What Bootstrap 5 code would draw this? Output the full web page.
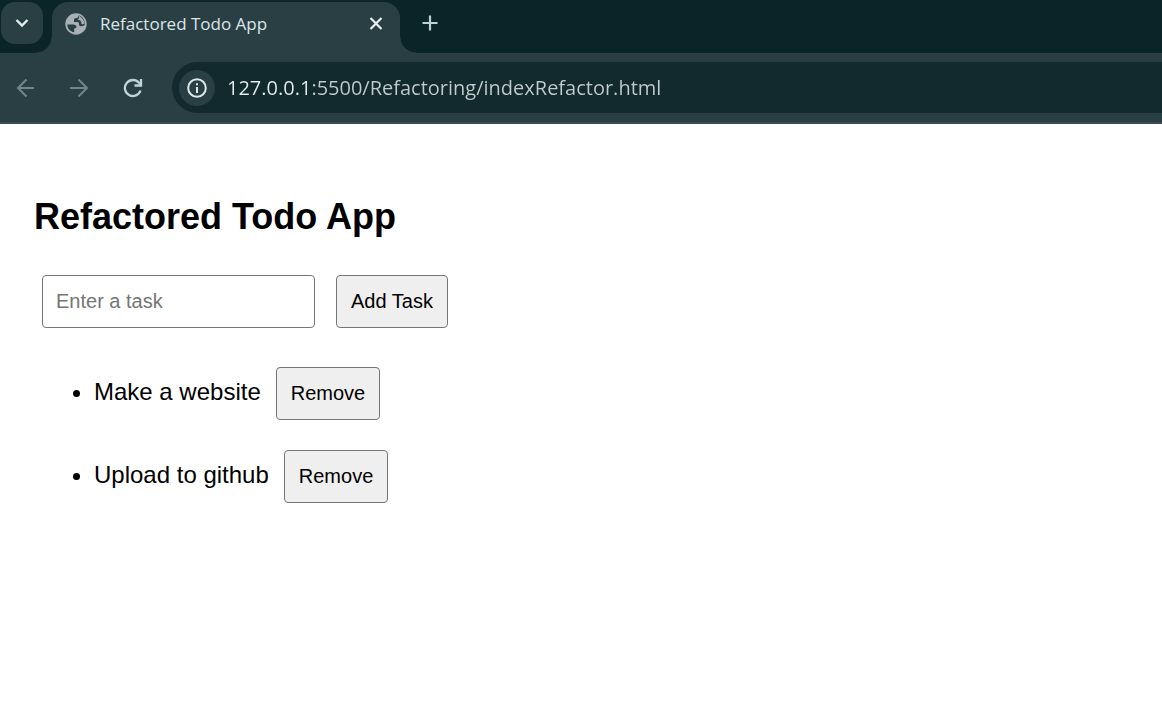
<!DOCTYPE html>
<html lang="en">
<head>
<meta charset="utf-8">
<meta name="viewport" content="width=device-width, initial-scale=1">
<title>Refactored Todo App</title>
<link href="https://cdn.jsdelivr.net/npm/bootstrap@5.3.0/dist/css/bootstrap.min.css" rel="stylesheet">
<style>
  :root { --strip: #0b2428; --bar: #293f44; --field: #12292d; }
  body { font-family: "Liberation Sans", Arial, sans-serif; color: #000; background: #fff; }
  svg { display: block; }

  /* Browser chrome */
  .browser { font-family: "Open Sans", "Noto Sans", sans-serif; }
  .browser button { background: none; border: 0; padding: 0; }
  .tab-strip { background: var(--strip); height: 53px; padding: 2px 0 0 1px; }
  .browser .tab-search { width: 42px; height: 42px; border-radius: 14px; background: var(--bar); }
  .page-tab { position: relative; width: 348px; max-width: 60%; height: 51px; margin-left: 9px; padding: 0 16px 8px 13px;
    background: var(--bar); border-radius: 16px 16px 0 0; }
  .page-tab::before, .page-tab::after { content: ""; position: absolute; bottom: 0; width: 16px; height: 16px; }
  .page-tab::before { right: 100%; background: radial-gradient(circle at 0 0, transparent 15px, var(--bar) 16px); }
  .page-tab::after { left: 100%; background: radial-gradient(circle at 100% 0, transparent 15px, var(--bar) 16px); }
  .tab-title { font-size: 17px; line-height: 24px; color: #dce5e7; margin-left: 13px; }
  .browser .new-tab { margin-left: 21px; height: 42px; }
  .tool-bar { background: var(--bar); padding: 9px 0 9px 15px; border-bottom: 2px solid #3a4a4e; }
  .nav-tools { gap: 33px; }
  .address { background: var(--field); height: 51px; margin-left: 28px; padding-left: 7px; border-radius: 26px 0 0 26px; }
  .browser .site-info { width: 36px; height: 36px; border-radius: 50%; background: var(--bar); }
  .url-box { border: 0; outline: 0; padding: 0; margin-left: 12px; font-size: 20px; line-height: 28px;
    background: linear-gradient(90deg, #e6eeef 84px, #c2cccd 84px); -webkit-background-clip: text; background-clip: text;
    -webkit-text-fill-color: transparent; }

  /* Todo page */
  .todo { padding: 69px 34px 30px; }
  .todo h1 { font-size: 36px; line-height: 48px; font-weight: 700; margin: 0 0 34px; }
  .todo form { gap: 21px; padding-left: 8px; }
  .todo .form-control, .todo .btn { height: 53px; font-size: 20px; line-height: 24px; border: 1px solid #767676; border-radius: 4px; color: #000; }
  .todo .form-control { width: 273px; padding: 0 13px; }
  .todo .form-control::placeholder { color: #757575; }
  .todo .btn { padding: 0 14px 2px; background: #efefef; }
  .task-list { margin: 39px 0 0; padding-left: 60px; font-size: 24px; line-height: 28px; }
  .task-list li + li { margin-top: 30px; }
  .task-list .btn { margin-left: 15px; vertical-align: baseline; }
</style>
</head>
<body>
<header class="browser">
  <div class="tab-strip d-flex align-items-start">
    <button type="button" class="tab-search d-flex align-items-center justify-content-center flex-shrink-0" aria-label="Search tabs">
      <svg width="14" height="10" viewBox="0 0 14 10" fill="none" stroke="#e3edee" stroke-width="2.4"><path d="M1.500 2 7 7.500 12.500 2"/></svg>
    </button>
    <div class="page-tab d-flex align-items-center">
      <svg class="flex-shrink-0" width="22" height="22" viewBox="0 0 22 22"><circle cx="11" cy="11" r="10.700" fill="#a7b0b5"/><path fill="#293f44" d="M13.500 2.500c0 1.600-.8 2.600-2.300 2.600-1.700 0-2.200.7-2.200 2v2h3.500c1.300 0 1.500 1 1.500 2.200 0 1.200.7 1.900 2 1.900 1.500 0 2.700-.4 3.700-1.200.3-4.500-1.700-8-5.200-9.500h-1ZM2.300 11.500h5.900c2 0 3.300 1 3.300 2.600 0 1-.8 1.400-2.300 1.400v3.800C5 18.600 2.300 15.500 2.300 11.500Z"/><path fill="#a7b0b5" d="M14 2.500c3 2 5.300 5 5.500 8-1 1-2.300.9-2.800.5-.6-.5-.2-2.200-1.200-3.200-1-.9-2.500-.8-3.500-1 2-.5 2.500-2 2-4.300Z"/></svg>
      <span class="tab-title text-nowrap overflow-hidden">Refactored Todo App</span>
      <button type="button" class="ms-auto" aria-label="Close tab">
        <svg width="16" height="16" viewBox="0 0 16 16" stroke="#e6eeef" stroke-width="2.200"><path d="m2.500 2 11 11m0-11-11 11"/></svg>
      </button>
    </div>
    <button type="button" class="new-tab d-flex align-items-center" aria-label="New tab">
      <svg width="18" height="18" viewBox="0 0 18 18" stroke="#bdd0d3" stroke-width="2.200"><path d="M9 1.500v15M1.500 9h15"/></svg>
    </button>
  </div>
  <nav class="tool-bar d-flex align-items-center" aria-label="Browser">
    <div class="nav-tools d-flex">
      <button type="button" aria-label="Back"><svg width="21" height="20" viewBox="0 0 21 20" fill="none" stroke="#71868a" stroke-width="2"><path d="M19 10H3m8.500-8.500L3 10l8.500 8.500"/></svg></button>
      <button type="button" aria-label="Forward"><svg width="21" height="20" viewBox="0 0 21 20" fill="none" stroke="#71868a" stroke-width="2"><path d="M1 10h17M9.500 1.500 18 10l-8.500 8.500"/></svg></button>
      <button type="button" aria-label="Reload"><svg width="21" height="20" viewBox="0 0 21 20" fill="none" stroke="#bdd3d7" stroke-width="2.300"><path d="M17.500 12.500A8 8 0 1 1 16 4.800L18 7"/><path d="M18 1v6.500h-6.500"/></svg></button>
    </div>
    <div class="address d-flex align-items-center flex-grow-1">
      <button type="button" class="site-info d-flex align-items-center justify-content-center flex-shrink-0" aria-label="Site information">
        <svg width="20" height="20" viewBox="0 0 20 20" fill="none" stroke="#dde8ea" stroke-width="2"><circle cx="10" cy="10" r="8.800"/><path d="M10 9v6M10 5.200v2"/></svg>
      </button>
      <input type="text" class="url-box flex-grow-1" aria-label="Address" value="127.0.0.1:5500/Refactoring/indexRefactor.html">
    </div>
  </nav>
</header>
<main class="todo">
  <h1>Refactored Todo App</h1>
  <form class="d-flex flex-wrap">
    <input type="text" class="form-control" placeholder="Enter a task" aria-label="Enter a task">
    <button type="button" class="btn">Add Task</button>
  </form>
  <ul class="task-list">
    <li>Make a website<button type="button" class="btn">Remove</button></li>
    <li>Upload to github<button type="button" class="btn">Remove</button></li>
  </ul>
</main>
<script src="https://cdn.jsdelivr.net/npm/bootstrap@5.3.0/dist/js/bootstrap.bundle.min.js"></script>
</body>
</html>
